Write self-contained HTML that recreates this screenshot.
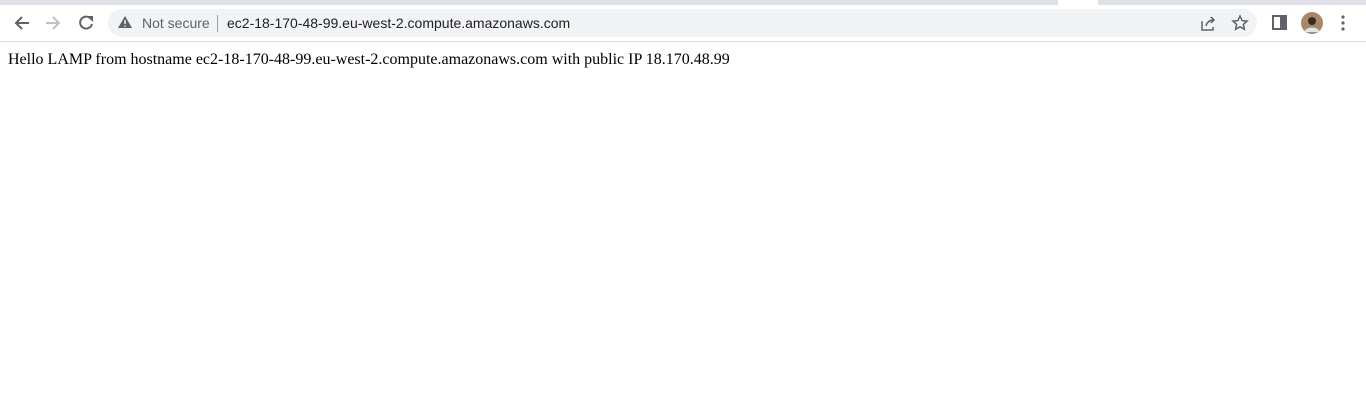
<!DOCTYPE html>
<html><head><style>
body{margin:0;width:1366px;height:418px;background:#fff;position:relative;overflow:hidden;font-family:"Liberation Serif",serif}
.top{position:absolute;left:0;top:0;width:1366px;height:5px;background:#dee1e6}
.gap{position:absolute;left:1058px;top:0;width:40px;height:5px;background:#fff}
.tb{position:absolute;left:0;top:5px;width:1366px;height:36px;background:#fff;border-bottom:1px solid #dadce0}
.omni{position:absolute;left:108px;top:9px;width:1149px;height:28px;background:#f1f3f4;border-radius:14px}
.ut{position:absolute;top:14px;font-family:"Liberation Sans",sans-serif;font-size:14px;line-height:18px}
svg{position:absolute}
.txt{position:absolute;left:8px;top:51px;font-size:16px;line-height:18px;color:#000}
</style></head><body>
<div class="top"></div><div class="gap"></div>
<div class="tb"></div>
<svg style="left:12px;top:14px" width="20" height="18" viewBox="0 0 20 18"><path d="M17 9H4M10 3L4 9l6 6" stroke="#5f6368" stroke-width="2" fill="none"/></svg>
<svg style="left:44px;top:14px" width="20" height="18" viewBox="0 0 20 18"><path d="M2 9h13M9 3l6 6-6 6" stroke="#bdc1c6" stroke-width="2" fill="none"/></svg>
<svg style="left:77px;top:14px" width="18" height="18" viewBox="0 0 18 18"><path d="M14 5A6 6 0 1 0 15 10" stroke="#5f6368" stroke-width="2" fill="none"/><path d="M10 2h6v6z" fill="#5f6368"/></svg>
<div class="omni"></div>
<svg style="left:117px;top:15px" width="16" height="14" viewBox="0 0 16 14"><path d="M8 1L15 13H1z" fill="#5f6368"/><path d="M8 5v4M8 10.5v1.2" stroke="#f1f3f4" stroke-width="1.5"/></svg>
<div class="ut" style="left:142px;color:#5f6368">Not secure</div>
<div style="position:absolute;left:217px;top:15px;width:1px;height:17px;background:#9aa0a6"></div>
<div class="ut" style="left:227px;color:#202124">ec2-18-170-48-99.eu-west-2.compute.amazonaws.com</div>
<svg style="left:1199px;top:14px" width="18" height="18" viewBox="0 0 18 18"><path d="M3 7v9h11v-3M7 12c1-4 4-6 8-6M12 3l3 3-3 3" stroke="#5f6368" stroke-width="1.5" fill="none"/></svg>
<svg style="left:1231px;top:14px" width="18" height="18" viewBox="0 0 18 18"><path d="M9 2l2.1 4.6 5 .5-3.8 3.3 1.1 4.9L9 12.8 4.6 15.3l1.1-4.9L1.9 7.1l5-.5z" stroke="#5f6368" stroke-width="1.5" fill="none"/></svg>
<svg style="left:1272px;top:15px" width="15" height="15" viewBox="0 0 15 15"><rect x="1" y="1" width="13" height="13" stroke="#5f6368" stroke-width="2" fill="none"/><rect x="8" y="1" width="6" height="13" fill="#5f6368"/></svg>
<svg style="left:1301px;top:12px" width="22" height="22" viewBox="0 0 22 22"><circle cx="11" cy="11" r="11" fill="#a8876a"/><circle cx="11" cy="9" r="4" fill="#3b2a22"/><path d="M3 20c3-6 13-6 16 0" fill="#e8e6e4"/></svg>
<svg style="left:1341px;top:15px" width="4" height="16" viewBox="0 0 4 16"><circle cx="2" cy="2" r="1.6" fill="#5f6368"/><circle cx="2" cy="8" r="1.6" fill="#5f6368"/><circle cx="2" cy="14" r="1.6" fill="#5f6368"/></svg>
<div class="txt">Hello LAMP from hostname ec2-18-170-48-99.eu-west-2.compute.amazonaws.com with public IP 18.170.48.99</div>
</body></html>
